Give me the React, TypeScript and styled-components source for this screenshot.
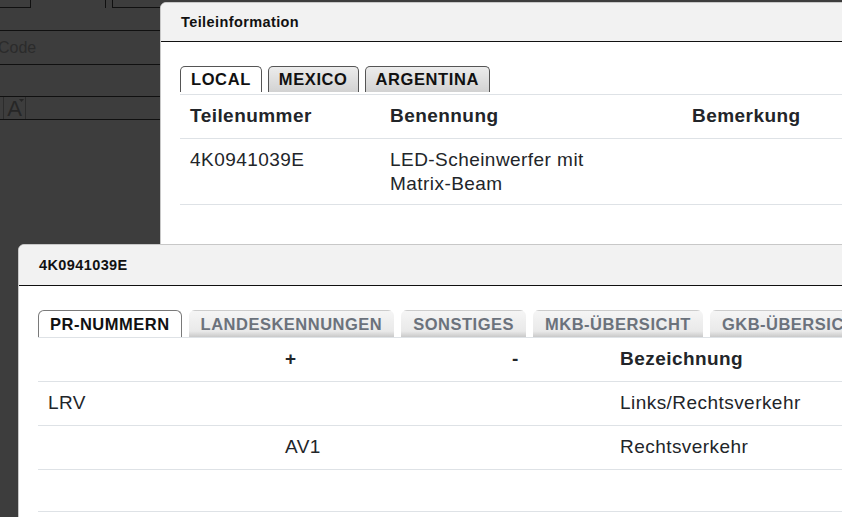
import styled, { createGlobalStyle } from "styled-components"

const GlobalStyle = createGlobalStyle`
    html, body {
        margin: 0;
        padding: 0;
    }
    body {
        background: #3d3d3d;
        font-family: "Liberation Sans", Arial, sans-serif;
        overflow: hidden;
    }
`

const Desktop = styled.div`
    position: relative;
    width: 842px;
    height: 517px;
    overflow: hidden;
    background: #3d3d3d;
`

// the page behind the overlay, only a few dark lines show through
const BackPage = styled.div`
    display: flex;
    flex-direction: column;
    width: 100%;
`

const BackRow = styled.div<{ $h: number }>`
    height: ${({ $h }) => $h}px;
    border-bottom: 1px solid #101010;
    display: flex;
    align-items: center;
`

const TopRow = styled(BackRow)`
    align-items: flex-start;
`

const StubBox = styled.div<{ $w: number }>`
    width: ${({ $w }) => $w}px;
    height: 7px;
    border-right: 1px solid #101010;
    border-bottom: 1px solid #101010;
    flex-shrink: 0;
`

const StubLine = styled.div`
    width: 6px;
    height: 8px;
    margin-left: 74px;
    border-left: 1px solid #101010;
    flex-shrink: 0;
`

const StubOpen = styled.div`
    width: 80px;
    height: 7px;
    border-left: 1px solid #101010;
    border-bottom: 1px solid #101010;
    flex-shrink: 0;
`

const BackLabel = styled.span`
    margin-left: -2px;
    font-size: 16px;
    color: #2b2b2b;
`

const ToolRow = styled(BackRow)`
    align-items: stretch;
`

const ToolEdge = styled.div`
    width: 3px;
    border-right: 1px solid #2c2c2c;
`

const ToolButton = styled.div`
    position: relative;
    width: 21px;
    border-right: 1px solid #2c2c2c;
    display: flex;
    align-items: flex-end;
    justify-content: center;
    font-size: 22px;
    line-height: 21px;
    color: #262626;

    svg {
        position: absolute;
        top: 2px;
        right: 1px;
    }
`

const Window = styled.section<{ $left: number; $top: number }>`
    position: absolute;
    left: ${({ $left }) => $left}px;
    top: ${({ $top }) => $top}px;
    right: -60px;
    bottom: -60px;
    background: #fff;
    border: 1px solid #c8c8c8;
    border-radius: 6px 6px 0 0;
    overflow: hidden;
`

const WindowHeader = styled.header<{ $h: number }>`
    height: ${({ $h }) => $h}px;
    padding-left: 20px;
    display: flex;
    align-items: center;
    background: #f2f2f2;
    border-bottom: 1px solid #111;
`

const Title = styled.h2`
    margin: 0;
    font-size: 14.5px;
    letter-spacing: 0.4px;
    font-weight: 700;
    color: #111;
`

const WindowBody = styled.div`
    padding: 24px 0 0 19px;
`

const TabBar = styled.div<{ $gap: number; $spaced?: boolean }>`
    display: flex;
    gap: ${({ $gap }) => $gap}px;
    padding-bottom: ${({ $spaced }) => ($spaced ? 2 : 0)}px;
    border-bottom: 1px solid #dee2e6;
`

const ClassicTab = styled.div<{ $active?: boolean }>`
    flex-shrink: 0;
    height: 25px;
    padding: 0 10px;
    display: flex;
    align-items: center;
    border: 1px solid #555;
    border-bottom: none;
    border-radius: 5px 5px 0 0;
    background: ${({ $active }) => ($active ? "#fff" : "linear-gradient(#ececec, #d2d2d2)")};
    font-size: 16.5px;
    letter-spacing: 0.6px;
    font-weight: 700;
    color: #111;
`

const SoftTab = styled.div<{ $active?: boolean }>`
    flex-shrink: 0;
    height: 26px;
    padding: 0 11px;
    display: flex;
    align-items: center;
    border: 1px solid ${({ $active }) => ($active ? "#7a7a7a" : "transparent")};
    border-bottom: none;
    border-radius: 6px 6px 0 0;
    background: ${({ $active }) =>
        $active ? "#fff" : "linear-gradient(#f5f5f5 0%, #e9e9e9 78%, #c9c9c9 100%)"};
    font-size: 16.5px;
    letter-spacing: 0.5px;
    font-weight: 700;
    white-space: nowrap;
    color: ${({ $active }) => ($active ? "#111" : "#6b727c")};
`

const Row = styled.div<{ $cols: string; $head?: boolean }>`
    display: grid;
    grid-template-columns: ${({ $cols }) => $cols};
    border-bottom: 1px solid #dee2e6;
    font-weight: ${({ $head }) => ($head ? 700 : 400)};
    color: #222529;
`

const Cell = styled.div`
    padding: 9px 10px 10px;
    font-size: 19px;
    line-height: 24px;
    letter-spacing: 0.45px;
    min-height: 22px;
`

const WrapCell = styled(Cell)`
    padding-bottom: 8px;
`

const PART_COLS = "200px 302px 1fr"
const PR_COLS = "237px 227px 108px 1fr"

const prRows = [
    { code: "LRV", plus: "", minus: "", text: "Links/Rechtsverkehr" },
    { code: "", plus: "AV1", minus: "", text: "Rechtsverkehr" },
    { code: "", plus: "", minus: "", text: "" },
]

const App = () => {
    return (
        <Desktop>
            <GlobalStyle />
            <BackPage>
                <TopRow $h={30}>
                    <StubBox $w={30} />
                    <StubLine />
                    <StubOpen />
                </TopRow>
                <BackRow $h={33}>
                    <BackLabel>Code</BackLabel>
                </BackRow>
                <BackRow $h={31} />
                <ToolRow $h={22}>
                    <ToolEdge />
                    <ToolButton>
                        A
                        <svg width="5" height="3" viewBox="0 0 5 3">
                            <path d="M0 0h5L2.5 3z" fill="#262626" />
                        </svg>
                    </ToolButton>
                </ToolRow>
            </BackPage>

            <Window $left={160} $top={2}>
                <WindowHeader $h={38}>
                    <Title>Teileinformation</Title>
                </WindowHeader>
                <WindowBody>
                    <TabBar $gap={6} $spaced>
                        <ClassicTab $active>LOCAL</ClassicTab>
                        <ClassicTab>MEXICO</ClassicTab>
                        <ClassicTab>ARGENTINA</ClassicTab>
                    </TabBar>
                    <Row $cols={PART_COLS} $head>
                        <Cell>Teilenummer</Cell>
                        <Cell>Benennung</Cell>
                        <Cell>Bemerkung</Cell>
                    </Row>
                    <Row $cols={PART_COLS}>
                        <WrapCell>4K0941039E</WrapCell>
                        <WrapCell>LED-Scheinwerfer mit<br />Matrix-Beam</WrapCell>
                        <WrapCell></WrapCell>
                    </Row>
                </WindowBody>
            </Window>

            <Window $left={18} $top={244}>
                <WindowHeader $h={40}>
                    <Title>4K0941039E</Title>
                </WindowHeader>
                <WindowBody>
                    <TabBar $gap={7}>
                        <SoftTab $active>PR-NUMMERN</SoftTab>
                        <SoftTab>LANDESKENNUNGEN</SoftTab>
                        <SoftTab>SONSTIGES</SoftTab>
                        <SoftTab>MKB-ÜBERSICHT</SoftTab>
                        <SoftTab>GKB-ÜBERSICHT</SoftTab>
                    </TabBar>
                    <Row $cols={PR_COLS} $head>
                        <Cell></Cell>
                        <Cell>+</Cell>
                        <Cell>-</Cell>
                        <Cell>Bezeichnung</Cell>
                    </Row>
                    {prRows.map((r, i) => (
                        <Row $cols={PR_COLS} key={i}>
                            <Cell>{r.code}</Cell>
                            <Cell>{r.plus}</Cell>
                            <Cell>{r.minus}</Cell>
                            <Cell>{r.text}</Cell>
                        </Row>
                    ))}
                </WindowBody>
            </Window>
        </Desktop>
    )
}

export default App
